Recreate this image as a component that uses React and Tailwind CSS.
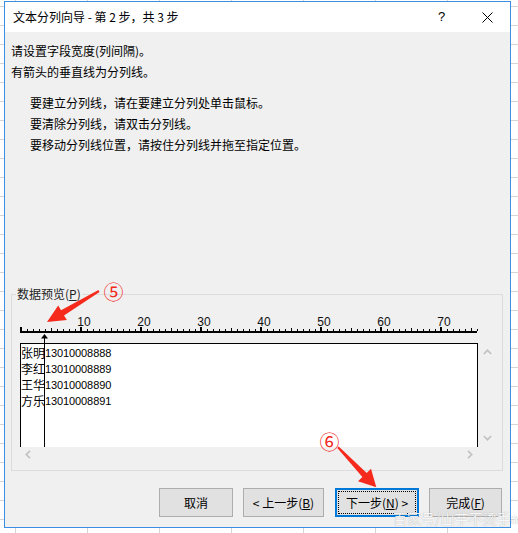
import React from "react";

function Chev({ dir }) {
  if (dir === "up")
    return (
      <svg width="9" height="6" viewBox="0 0 9 6" className="block">
        <polyline points="0.8,5 4.5,1.3 8.2,5" fill="none" stroke="#c2c2c2" strokeWidth="1.7" />
      </svg>
    );
  if (dir === "down")
    return (
      <svg width="9" height="6" viewBox="0 0 9 6" className="block">
        <polyline points="0.8,1 4.5,4.7 8.2,1" fill="none" stroke="#c2c2c2" strokeWidth="1.7" />
      </svg>
    );
  if (dir === "left")
    return (
      <svg width="6" height="9" viewBox="0 0 6 9" className="block">
        <polyline points="5,0.8 1.3,4.5 5,8.2" fill="none" stroke="#c2c2c2" strokeWidth="1.7" />
      </svg>
    );
  return (
    <svg width="6" height="9" viewBox="0 0 6 9" className="block">
      <polyline points="1,0.8 4.7,4.5 1,8.2" fill="none" stroke="#c2c2c2" strokeWidth="1.7" />
    </svg>
  );
}

function Ruler() {
  const items = [];
  for (let i = 0; i <= 76; i++) {
    const x = 9 + 6 * i;
    if (i % 10 === 0) items.push(<rect key={i} x={x - 1} y={25} width={2} height={4} fill="#000" />);
    else if (i % 5 === 0) items.push(<rect key={i} x={x} y={26} width={1} height={3} fill="#000" />);
    else items.push(<rect key={i} x={x} y={27} width={1} height={2} fill="#000" />);
  }
  const nums = [10, 20, 30, 40, 50, 60, 70];
  return (
    <svg width="490" height="41" className="block">
      <rect x="8" y="29" width="457" height="2" fill="#000" />
      {items}
      {nums.map((n) => (
        <text
          key={n}
          x={9 + 6 * n + 3}
          y="24"
          textAnchor="middle"
          fontSize="12"
          fontFamily="'Liberation Sans', sans-serif"
          fill="#111"
        >
          {n}
        </text>
      ))}
      <polygon points="32.5,32 29,36.5 36,36.5" fill="#000" />
      <rect x="32" y="36" width="1" height="5" fill="#000" />
    </svg>
  );
}

const rows = [
  ["张明", "13010008888"],
  ["李红", "13010008889"],
  ["王华", "13010008890"],
  ["方乐", "13010008891"],
];

function Btn({ w, children, primary }) {
  if (primary) {
    return (
      <div className={`${w} h-[29px] border-2 border-[#0078d7] bg-[#e1e1e1] p-[1px]`}>
        <div className="w-full h-full border border-dotted border-black flex items-center justify-center">
          {children}
        </div>
      </div>
    );
  }
  return (
    <div className={`${w} h-[29px] border border-[#adadad] bg-[#e1e1e1] flex items-center justify-center`}>
      {children}
    </div>
  );
}

export default function App() {
  return (
    <div className="relative w-[518px] h-[533px] overflow-hidden bg-white bg-[linear-gradient(to_right,#d4d4d4_1px,transparent_1px),linear-gradient(to_bottom,#d4d4d4_1px,transparent_1px)] bg-size-[72px_19px] bg-position-[15px_6px] pt-[1px] pl-[4px] [font-family:'Noto_Sans_CJK_SC',sans-serif] text-[12px] text-black">
      <div className="w-[507px] h-[527px] border border-[#3c8ee5] bg-[#f0f0f0] flex flex-col">
        {/* Title bar */}
        <div className="h-[30px] bg-white flex items-center shrink-0">
          <div className="flex-1 pl-[8px] leading-[16px] whitespace-pre">文本分列向导 - 第 2 步，共 3 步</div>
          <div className="w-[45px] h-full flex items-center justify-center [font-family:'Liberation_Sans',sans-serif] text-[13px]">?</div>
          <div className="w-[46px] h-full flex items-center justify-center">
            <svg width="11" height="11" viewBox="0 0 11 11" className="block">
              <line x1="0.5" y1="0.5" x2="10.5" y2="10.5" stroke="#000" strokeWidth="1" />
              <line x1="10.5" y1="0.5" x2="0.5" y2="10.5" stroke="#000" strokeWidth="1" />
            </svg>
          </div>
        </div>

        {/* Body */}
        <div className="flex-1 flex flex-col">
          <div className="pt-[8px] pl-[6px] leading-[21px]">
            <div>请设置字段宽度(列间隔)。</div>
            <div>有箭头的垂直线为分列线。</div>
          </div>
          <div className="mt-[10px] pl-[25px] leading-[21px]">
            <div>要建立分列线，请在要建立分列处单击鼠标。</div>
            <div>要清除分列线，请双击分列线。</div>
            <div>要移动分列线位置，请按住分列线并拖至指定位置。</div>
          </div>

          <fieldset className="mt-[131px] ml-[6px] w-[492px] border border-[#dcdcdc] pb-[9px]">
            <legend className="ml-[4px] px-[1px] leading-[16px] text-[#222]">
              数据预览(<span className="underline">P</span>)
            </legend>
            <Ruler />
            <div className="flex">
              <div className="relative ml-[8px] w-[458px] h-[104px] bg-white border-l border-t border-r border-black pt-[1px]">
                {rows.map(([n, p]) => (
                  <div key={n} className="h-[16px] leading-[16px] flex items-center whitespace-nowrap">
                    <span className="w-[24px] text-[12px] leading-[16px]">{n}</span>
                    <span className="[font-family:'Liberation_Sans',sans-serif] text-[11px] tracking-[-0.1px] leading-[16px]">{p}</span>
                  </div>
                ))}
                <div className="absolute left-[23px] top-0 bottom-0 w-px bg-black" />
              </div>
              <div className="w-[18px] h-[104px] flex flex-col items-center justify-between py-[6px]">
                <Chev dir="up" />
                <Chev dir="down" />
              </div>
            </div>
            <div className="ml-[8px] w-[458px] h-[14px] flex items-center justify-between px-[5px]">
              <Chev dir="left" />
              <Chev dir="right" />
            </div>
          </fieldset>

          <div className="mt-[17px] flex pl-[154px]">
            <Btn w="w-[74px]">取消</Btn>
            <div className="w-[10px]" />
            <Btn w="w-[81px]">
              <span className="whitespace-pre">&lt; 上一步(<span className="underline">B</span>)</span>
            </Btn>
            <div className="w-[11px]" />
            <Btn w="w-[84px]" primary>
              <span className="whitespace-pre">下一步(<span className="underline">N</span>) &gt;</span>
            </Btn>
            <div className="w-[10px]" />
            <Btn w="w-[73px]">
              <span>完成(<span className="underline">F</span>)</span>
            </Btn>
          </div>
        </div>
      </div>

      {/* Annotations */}
      <svg className="absolute left-0 top-0 pointer-events-none" width="518" height="533">
        <polygon
          points="98.5,290.1 61,310.2 58.2,305.5 47,322 66.9,320.1 64,315.4 99.5,291.9"
          fill="#f52a1c"
        />
        <polygon
          points="338.7,446.6 366.7,473 371,468.8 376.3,487.3 358,481.3 362.4,477.1 337.3,448"
          fill="#f52a1c"
        />
      </svg>
      <div className="absolute left-[103px] top-[281px] w-[21px] h-[21px] flex items-center justify-center text-[20px] leading-none text-[#f0281e]">
        ⑤
      </div>
      <div className="absolute left-[319px] top-[431px] w-[21px] h-[21px] flex items-center justify-center text-[20px] leading-none text-[#f0281e]">
        ⑥
      </div>
      <div className="absolute left-[393px] top-[509px] text-[14px] leading-[18px] text-white/90 whitespace-nowrap [text-shadow:0_0_1px_rgba(0,0,0,0.35)]">
        百家号/山芋不烫手a
      </div>
    </div>
  );
}
